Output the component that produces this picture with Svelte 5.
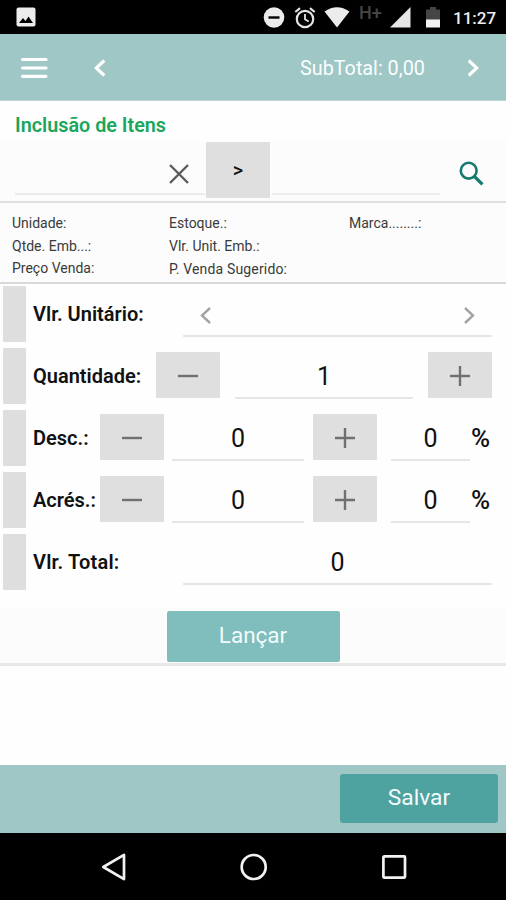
<script>
  const info = [
    ['Unidade:', 'Estoque.:', 'Marca........:'],
    ['Qtde. Emb...:', 'Vlr. Unit. Emb.:', ''],
    ['Preço Venda:', 'P. Venda Sugerido:', '']
  ];
  const adjustments = ['Desc.:', 'Acrés.:'];
</script>

{#snippet minus()}
  <svg width="22" height="22" viewBox="0 0 22 22"><path d="M1 11H21" stroke="#707070" stroke-width="2.4" /></svg>
{/snippet}

{#snippet plus()}
  <svg width="22" height="22" viewBox="0 0 22 22"><path d="M1 11H21M11 1V21" stroke="#707070" stroke-width="2.4" /></svg>
{/snippet}

<div class="screen">
  <div class="status">
    <svg class="photo" width="20" height="20" viewBox="0 0 20 20">
      <rect x=".5" y=".5" width="19" height="19" rx="2" fill="#ececec" />
      <path d="M3 16L7 11L9.5 14L12.5 9.5L17 16Z" fill="#000" />
    </svg>
    <svg class="dnd" width="22" height="22" viewBox="0 0 22 22">
      <circle cx="11" cy="10.5" r="10.3" fill="#ececec" />
      <path d="M5.5 10.5H16.5" stroke="#000" stroke-width="2.4" />
    </svg>
    <svg class="alarm" width="22" height="22" viewBox="0 0 22 22" fill="none" stroke="#e4e4e4">
      <circle cx="11" cy="12" r="8.2" stroke-width="2.2" />
      <path d="M1.3 5L6 1.2M16 1.2L20.7 5" stroke-width="2.2" />
      <path d="M11 7V12.3L14.7 14.6" stroke-width="1.8" />
    </svg>
    <svg class="wifi" width="26" height="21" viewBox="0 0 26 21">
      <path d="M.5 4.5Q13-4 25.5 4.5L13 20.5Z" fill="#ececec" />
    </svg>
    <span class="net">H+</span>
    <svg class="signal" width="21" height="21" viewBox="0 0 21 21"><path d="M0 20.5L20.5 0V20.5Z" fill="#e6e6e6" /></svg>
    <svg class="battery" width="14" height="21" viewBox="0 0 14 21">
      <path d="M0 2.5H4V0H10V2.5H14V13H0Z" fill="#454545" />
      <path d="M0 12.5H14V20.5H0Z" fill="#f2f2f2" />
    </svg>
    <span class="clock">11:27</span>
  </div>

  <header>
    <svg class="menu" width="28" height="22" viewBox="0 0 28 22">
      <path d="M2.5 2.5H26M2.5 11H26M2.5 19.3H26" stroke="#fff" stroke-width="3.2" stroke-linecap="round" />
    </svg>
    <svg class="back" width="12" height="18" viewBox="0 0 12 18">
      <path d="M10.3 1.5L2.3 9L10.3 16.5" fill="none" stroke="#fff" stroke-width="3.2" />
    </svg>
    <span class="subtotal">SubTotal: 0,00</span>
    <svg class="next" width="12" height="18" viewBox="0 0 12 18">
      <path d="M1.7 1.5L9.7 9L1.7 16.5" fill="none" stroke="#fff" stroke-width="3.2" />
    </svg>
  </header>

  <h1><span>Inclusão de Itens</span></h1>

  <section class="search">
    <div class="code">
      <svg width="20" height="20" viewBox="0 0 20 20"><path d="M1 1L19 19M19 1L1 19" stroke="#5c5c5c" stroke-width="2.4" /></svg>
    </div>
    <button class="go">&gt;</button>
    <div class="name"></div>
    <svg class="lens" width="25" height="25" viewBox="0 0 25 25" fill="none" stroke="#17796f">
      <circle cx="9.7" cy="9.7" r="7.9" stroke-width="2.6" />
      <path d="M15.3 15.3L23.4 23.4" stroke-width="3.3" />
    </svg>
  </section>

  <section class="info">
    {#each info as row}
      <div class="info-row">
        {#each row as cell}<span>{cell}</span>{/each}
      </div>
    {/each}
  </section>

  <main>
    <div class="row">
      <i class="handle"></i>
      <label class="unit" for="unit">Vlr. Unitário:</label>
      <div class="field wide picker" id="unit">
        <svg width="12" height="17" viewBox="0 0 12 17"><path d="M10 1L2 8.5L10 16" fill="none" stroke="#a3a3a3" stroke-width="2.4" /></svg>
        <svg width="12" height="17" viewBox="0 0 12 17"><path d="M2 1L10 8.5L2 16" fill="none" stroke="#a3a3a3" stroke-width="2.4" /></svg>
      </div>
    </div>
    <div class="row">
      <i class="handle"></i>
      <span class="label qty">Quantidade:</span>
      <button class="step">{@render minus()}</button>
      <div class="field amount">1</div>
      <button class="step">{@render plus()}</button>
    </div>
    {#each adjustments as name}
      <div class="row">
        <i class="handle"></i>
        <span class="label adj">{name}</span>
        <button class="step">{@render minus()}</button>
        <div class="field value">0</div>
        <button class="step">{@render plus()}</button>
        <div class="field rate">0</div>
        <span class="pct">%</span>
      </div>
    {/each}
    <div class="row">
      <i class="handle"></i>
      <span class="label unit total">Vlr. Total:</span>
      <div class="field wide">0</div>
    </div>
  </main>

  <div class="launch"><button>Lançar</button></div>

  <footer><button>Salvar</button></footer>

  <nav>
    <svg width="26" height="28" viewBox="0 0 26 28"><path d="M23 1.9V26.1L2.3 14Z" fill="none" stroke="#f2f2f2" stroke-width="2.7" stroke-linejoin="round" /></svg>
    <svg width="28" height="28" viewBox="0 0 28 28"><circle cx="13.7" cy="14" r="12" fill="none" stroke="#f2f2f2" stroke-width="2.7" /></svg>
    <svg width="26" height="26" viewBox="0 0 26 26"><rect x="2.4" y="2.4" width="21.6" height="21.2" rx=".8" fill="none" stroke="#f2f2f2" stroke-width="2.7" /></svg>
  </nav>
</div>

<style>
  :global(body) { background: #fff; }
  .screen {
    width: 506px;
    height: 900px;
    display: flex;
    flex-direction: column;
    overflow: hidden;
    background: #fefefe;
    color: #111;
    font-family: Roboto, sans-serif;
    line-height: 1;
    white-space: nowrap;
  }
  .screen > * { flex-shrink: 0; box-sizing: border-box; }
  svg { display: block; flex-shrink: 0; }
  button { border: 0; padding: 0; font: inherit; color: inherit; }
  .status { height: 34px; background: #000; display: flex; align-items: flex-start; padding: 7px 0 0 16px; }
  .dnd { margin-left: 227px; }
  .alarm { margin-left: 9px; }
  .wifi { margin-left: 8px; }
  .net { width: 24px; margin: -3px 0 0 9px; color: #454545; font-size: 18px; font-weight: 500; }
  .signal { margin-left: 7px; }
  .battery { margin-left: 15px; }
  .clock { margin: 3px 0 0 13px; color: #eee; font-size: 17px; font-weight: 500; }
  header { height: 67px; background: #9fc7c6; display: flex; align-items: center; padding: 2px 0 0 20px; border-bottom: 1px solid #b9d6d5; }
  .back { margin-left: 46px; }
  .subtotal { width: 127px; margin-left: 194px; padding-top: 1px; color: #fafefe; font-size: 19.8px; }
  .next { margin-left: 40px; }
  h1 { height: 41px; margin: 0; padding: 15px 0 0 15px; color: #1aa65b; font-size: 19.8px; font-weight: 600; }
  .search { height: 61px; display: flex; border-bottom: 2px solid #dedede; background: #fcfcfc; }
  .code { width: 190px; height: 53px; box-sizing: border-box; margin-left: 15px; border-bottom: 2px solid #ebebeb; padding: 22px 0 0 154px; }
  .go { width: 64px; height: 56px; margin-left: 1px; background: #dfdfdf; font-size: 20px; font-weight: 500; border-radius: 1px; }
  .name { width: 168px; height: 53px; box-sizing: border-box; margin-left: 2px; border-bottom: 2px solid #ededed; }
  .lens { margin: 19px 0 0 19px; }
  .info { height: 81px; padding: 9px 0 0 12px; background: #fcfcfc; border-bottom: 2px solid #d9d9d9; font-size: 14px; color: #3a3a3a; }
  .info-row { display: grid; grid-template-columns: 157px 180px 1fr; height: 22.6px; align-items: center; }
  .info-row:last-child span:nth-child(2) { letter-spacing: .16px; padding-top: 2px; }
  .row { height: 62px; display: flex; align-items: flex-start; padding: 2px 0 0 3px; box-sizing: border-box; }
  .handle { width: 23px; height: 56px; background: #dedede; border-radius: 1px; margin-right: 7px; flex-shrink: 0; }
  label, .label { height: 56px; line-height: 56px; font-size: 20px; font-weight: 600; flex-shrink: 0; }
  .unit { width: 150px; }
  .total { letter-spacing: .2px; }
  .qty { width: 123px; }
  .adj { width: 67px; }
  .field { height: 51px; box-sizing: border-box; border-bottom: 2px solid #e6e6e6; text-align: center; font-size: 25px; line-height: 58px; flex-shrink: 0; }
  .wide { width: 309px; }
  .picker { display: flex; justify-content: space-between; padding: 21px 17px 0 17px; }
  .step { width: 64px; height: 46px; margin-top: 4px; padding-top: 1px; background: #dfdfdf; border-radius: 1px; display: grid; place-items: center; flex-shrink: 0; }
  .amount { width: 178px; margin: 0 15px; }
  .value { width: 132px; margin: 0 9px 0 8px; }
  .rate { width: 79px; margin-left: 14px; }
  .pct { height: 56px; line-height: 56px; font-size: 26px; font-weight: 500; margin-left: 1px; }
  .launch { height: 58px; margin-top: 14px; display: flex; justify-content: center; background: #fcfcfc; border-bottom: 3px solid #e8e8e8; padding-top: 3px; }
  .launch button { width: 173px; height: 51px; padding-bottom: 2px; background: #7fbebc; color: #f2fbfb; font-size: 22.5px; border-radius: 2px; }
  footer { height: 68px; margin-top: 99px; background: #9fc7c6; display: flex; justify-content: flex-end; padding: 9px 8px 0; }
  footer button { width: 158px; height: 49px; background: #4ea3a1; color: #f4fcfc; font-size: 22.8px; border-radius: 3px; }
  nav { height: 67px; background: #000; display: flex; align-items: center; padding-left: 101px; }
  nav svg:nth-child(2) { margin-left: 113px; }
  nav svg:nth-child(3) { margin-left: 113px; }
</style>
